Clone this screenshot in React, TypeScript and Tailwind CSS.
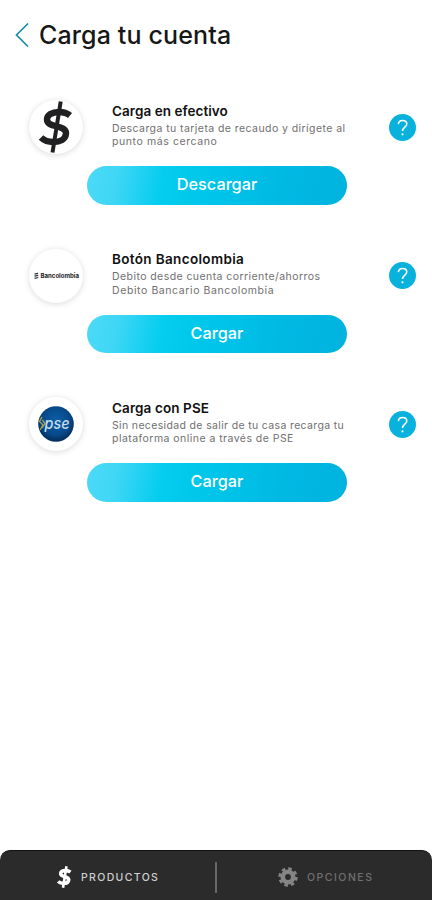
import type { ReactNode } from 'react';

type Line = {
  text: string;
  className: string;
};

type Method = {
  title: Line;
  lines: Line[];
  action: string;
  logo: ReactNode;
};

function DollarIcon({ className, weight = 6.4 }: { className: string; weight?: number }) {
  return (
    <svg viewBox="0 0 34 52" className={className} fill="none" stroke="currentColor">
      <path d="M31 14.500C28 12 24 11 20 11C13 11 8 14 8 18.500C8 27.500 27.300 23 27 32.500C26.500 38.500 21 41 14.500 41C9.500 41 5 39.500 2 36.500" strokeWidth={weight} />
      <path d="M21.700 .5L13.500 51.500" strokeWidth={weight - 2.4} />
    </svg>
  );
}

function PseLogo() {
  return (
    <svg viewBox="0 0 36 36" className="size-9">
      <defs>
        <radialGradient id="pse" cx="0.5" cy="0.42" r="0.55">
          <stop offset="0" stopColor="#0c5fa8" />
          <stop offset="0.7" stopColor="#074a8b" />
          <stop offset="1" stopColor="#062f5e" />
        </radialGradient>
      </defs>
      <circle cx="18" cy="18" r="17.800" fill="url(#pse)" />
      <path d="M4 11L1.500 15.500L5 19L2 24M4.500 14L7 17.500L4 22" fill="none" stroke="#a8a34b" strokeWidth="1.300" />
      <text x="6.500" y="22.500" textLength="25" lengthAdjust="spacingAndGlyphs" fill="#c3dbea" fontSize="16" fontStyle="italic" fontWeight="500" fontFamily="Inter, sans-serif">
        pse
      </text>
    </svg>
  );
}

function BancolombiaLogo() {
  return (
    <svg viewBox="0 0 48 12" className="h-3 w-12">
      <path d="M2.500 4.200L6 3.400M2.500 6.200L6.300 5.400M2.500 8.300L6.300 7.500" stroke="#333" strokeWidth="1.200" />
      <text x="8.500" y="8.200" textLength="38.500" lengthAdjust="spacingAndGlyphs" fill="#222" fontSize="6" fontWeight="700" fontFamily="Inter, sans-serif">
        Bancolombia
      </text>
    </svg>
  );
}

const methods: Method[] = [
  {
    title: { text: 'Carga en efectivo', className: 'tracking-[0.05px]' },
    lines: [
      { text: 'Descarga tu tarjeta de recaudo y dirígete al', className: 'tracking-[0.43px]' },
      { text: 'punto más cercano', className: 'tracking-[0.59px]' },
    ],
    action: 'Descargar',
    logo: <DollarIcon className="h-[52px] w-[34px] text-[#202023]" />,
  },
  {
    title: { text: 'Botón Bancolombia', className: 'tracking-[0.35px]' },
    lines: [
      { text: 'Debito desde cuenta corriente/ahorros', className: 'tracking-[0.43px]' },
      { text: 'Debito Bancario Bancolombia', className: 'tracking-[0.59px]' },
    ],
    action: 'Cargar',
    logo: <BancolombiaLogo />,
  },
  {
    title: { text: 'Carga con PSE', className: 'tracking-[0.1px]' },
    lines: [
      { text: 'Sin necesidad de salir de tu casa recarga tu', className: 'tracking-[0.35px]' },
      { text: 'plataforma online a través de PSE', className: 'tracking-[0.46px]' },
    ],
    action: 'Cargar',
    logo: <PseLogo />,
  },
];

function MethodCard({ method }: { method: Method }) {
  return (
    <section className="h-[148.7px]">
      <div className="flex h-[54px] items-center pr-4 pl-[29px]">
        <div className="flex size-[54px] shrink-0 items-center justify-center rounded-full bg-white shadow-[0_1px_6px_rgba(0,0,0,0.15)]">
          {method.logo}
        </div>
        <div className="ml-[29px] flex-1 pb-[3px] whitespace-nowrap">
          <h2 className={`mb-0.5 text-[13.5px] leading-[17px] font-semibold text-[#111] ${method.title.className}`}>
            {method.title.text}
          </h2>
          {method.lines.map((line) => (
            <p key={line.text} className={`text-[10.5px] leading-[13.3px] text-[#707070] ${line.className}`}>
              {line.text}
            </p>
          ))}
        </div>
        <button className="flex size-[27px] shrink-0 items-center justify-center rounded-full bg-[#08b2dc] text-white">
          <svg viewBox="0 0 27 27" className="size-[27px]" fill="none" stroke="currentColor">
            <path d="M9.300 10.200C9.600 7.800 11.300 6.500 13.500 6.500C16 6.500 17.800 7.900 17.800 10.100C17.800 13.100 13.500 13.300 13.500 17" strokeWidth="1.600" />
            <circle cx="13.500" cy="20.300" r="1.100" fill="currentColor" stroke="none" />
          </svg>
        </button>
      </div>
      <button className="mt-3 ml-[87px] flex h-[38.5px] w-[260px] items-center justify-center rounded-full bg-[linear-gradient(100deg,#4cdaf8_0%,#3fd6f5_12%,#05cdef_29%,#00c8eb_42%,#00b9e3_75%,#00b3de_100%)] pb-0.5 text-[16.3px] font-medium text-white">
        {method.action}
      </button>
    </section>
  );
}

export default function App() {
  return (
    <div className="flex h-[900px] w-[432px] flex-col overflow-hidden bg-white font-['Inter','Liberation_Sans',sans-serif]">
      <header className="flex h-[70px] items-center pl-[14px]">
        <svg viewBox="0 0 16 26" className="h-[26px] w-4" fill="none" stroke="#168ca5" strokeWidth="1.700">
          <path d="M14 1.500L2.500 13L14 24.500" />
        </svg>
        <h1 className="ml-[9px] pt-0.5 text-[25px] font-medium tracking-[0.13px] whitespace-nowrap text-[#171717]">Carga tu cuenta</h1>
      </header>

      <main className="flex-1 pt-[30px]">
        {methods.map((method) => (
          <MethodCard key={method.title.text} method={method} />
        ))}
      </main>

      <nav className="flex h-[50px] items-center rounded-t-[10px] border-t border-[#111] bg-[#2b2b2b] pt-[3px]">
        <div className="flex w-[215px] items-center pl-[57px]">
          <DollarIcon className="h-[22px] w-[15px] text-white" weight={8.5} />
          <span className="ml-[9px] pt-0.5 text-[10.5px] font-medium tracking-[1.35px] text-[#cfcfcf]">PRODUCTOS</span>
        </div>
        <div className="h-[31px] w-0.5 bg-[#686868]" />
        <div className="flex flex-1 items-center pl-[61px]">
          <svg viewBox="-10 -10 20 20" className="size-5 text-[#858585]" fill="none" stroke="currentColor">
            <circle r="5.200" strokeWidth="4.600" />
            <circle r="8.300" strokeWidth="2.800" strokeDasharray="3.500 3.019" />
          </svg>
          <span className="ml-[9px] pt-0.5 text-[10.5px] font-medium tracking-[1.5px] text-[#707070]">OPCIONES</span>
        </div>
      </nav>
    </div>
  );
}
